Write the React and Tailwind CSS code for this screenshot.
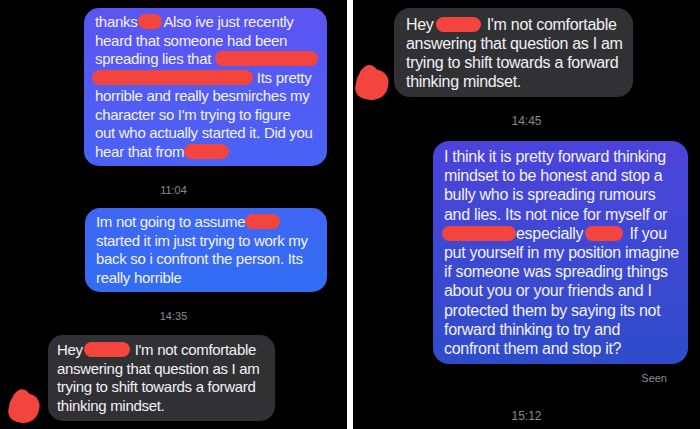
import React from "react";

const font = { fontFamily: '"Liberation Sans", Arial, sans-serif' };

function Blob({ className }) {
  return (
    <span
      className={
        "inline-block align-middle bg-[#f3443d] rounded-full h-[15px] -mt-[3px] " +
        className
      }
    />
  );
}

function Avatar({ className }) {
  return (
    <div className={"relative shrink-0 " + className}>
      <div className="absolute inset-0 bg-[#f3443d] rounded-[45%_40%_50%_35%] rotate-12" />
      <div className="absolute left-[4px] top-[-3px] w-[60%] h-[60%] bg-[#f3443d] rounded-[40%] rotate-45" />
    </div>
  );
}

function Line({ children }) {
  return <div className="whitespace-nowrap">{children}</div>;
}

export default function App() {
  return (
    <div
      className="w-[700px] h-[429px] bg-black overflow-hidden flex text-[#f2f2f7]"
      style={font}
    >
      {/* Left panel */}
      <div className="w-[347px] shrink-0 flex flex-col">
        <div className="mt-[8px] ml-[84px] w-[243px] px-[11px] py-[5px] rounded-[15px] bg-gradient-to-b from-[#5b54f3] to-[#4962f6] text-[15px] leading-[18.5px] tracking-[-0.3px]">
          <Line>
            thanks<Blob className="w-[24px] mx-[1px]" />Also ive just recently
          </Line>
          <Line>heard that someone had been</Line>
          <Line>
            spreading lies that <Blob className="w-[103px]" />
          </Line>
          <Line>
            <Blob className="w-[161px] -ml-[3px]" /> Its pretty
          </Line>
          <Line>horrible and really besmirches my</Line>
          <Line>character so I'm trying to figure</Line>
          <Line>out who actually started it. Did you</Line>
          <Line>
            hear that from<Blob className="w-[45px]" />
          </Line>
        </div>
        <div className="mt-[16px] text-center text-[11px] leading-[16px] text-[#8a8a8e]">
          11:04
        </div>
        <div className="mt-[10px] ml-[85px] w-[242px] px-[11px] py-[5px] rounded-[15px] bg-gradient-to-b from-[#3f66f5] to-[#306ef2] text-[15px] leading-[18.5px] tracking-[-0.3px]">
          <Line>
            Im not going to assume<Blob className="w-[35px]" />
          </Line>
          <Line>started it im just trying to work my</Line>
          <Line>back so i confront the person. Its</Line>
          <Line>really horrible</Line>
        </div>
        <div className="mt-[16px] text-center text-[11px] leading-[16px] text-[#8a8a8e]">
          14:35
        </div>
        <div className="mt-[11px] flex items-end">
          <Avatar className="ml-[9px] w-[30px] h-[30px] -mb-[2px]" />
          <div className="ml-[9px] w-[227px] px-[9px] py-[6px] rounded-[15px] bg-[#313133] text-[15px] leading-[18.5px] tracking-[-0.3px]">
            <Line>
              Hey<Blob className="w-[46px] mx-[1px]" /> I'm not comfortable
            </Line>
            <Line>answering that question as I am</Line>
            <Line>trying to shift towards a forward</Line>
            <Line>thinking mindset.</Line>
          </div>
        </div>
      </div>

      {/* Divider */}
      <div className="w-[6px] shrink-0 bg-white" />

      {/* Right panel */}
      <div className="w-[347px] shrink-0 flex flex-col">
        <div className="mt-[8px] flex items-end">
          <Avatar className="ml-[3px] w-[32px] h-[31px] -mb-[3px]" />
          <div className="ml-[6px] w-[239px] px-[12px] pt-[7px] pb-[6px] rounded-[16px] bg-[#313133] text-[16px] leading-[19px] tracking-[-0.3px]">
            <Line>
              Hey<Blob className="w-[45px] mx-[2px]" /> I'm not comfortable
            </Line>
            <Line>answering that question as I am</Line>
            <Line>trying to shift towards a forward</Line>
            <Line>thinking mindset.</Line>
          </div>
        </div>
        <div className="mt-[16px] text-center text-[12px] leading-[16px] text-[#8a8a8e]">
          14:45
        </div>
        <div className="mt-[12px] ml-[80px] w-[255px] px-[11px] pt-[6px] pb-[6px] rounded-[16px] bg-gradient-to-b from-[#4b43dc] to-[#2e4cca] text-[16px] leading-[19.2px] tracking-[-0.3px]">
          <Line>I think it is pretty forward thinking</Line>
          <Line>mindset to be honest and stop a</Line>
          <Line>bully who is spreading rumours</Line>
          <Line>and lies. Its not nice for myself or</Line>
          <Line>
            <Blob className="w-[74px] -ml-[2px]" />especially<Blob className="w-[38px] mx-[2px]" /> If you
          </Line>
          <Line>put yourself in my position imagine</Line>
          <Line>if someone was spreading things</Line>
          <Line>about you or your friends and I</Line>
          <Line>protected them by saying its not</Line>
          <Line>forward thinking to try and</Line>
          <Line>confront them and stop it?</Line>
        </div>
        <div className="mt-[8px] self-end mr-[33px] text-[11px] leading-[12px] text-[#8a8a8e]">
          Seen
        </div>
        <div className="mt-[24px] text-center text-[12px] leading-[16px] text-[#8a8a8e]">
          15:12
        </div>
      </div>
    </div>
  );
}
